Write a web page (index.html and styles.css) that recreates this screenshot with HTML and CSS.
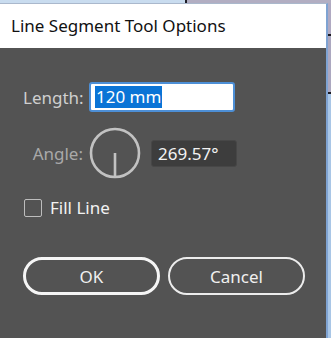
FILE: index.html
```html
<!DOCTYPE html>
<html>
<head>
<meta charset="utf-8">
<link rel="stylesheet" href="styles.css">
</head>
<body>
<div class="topstrip"><div class="strip-left"></div><div class="strip-tick"></div><div class="strip-right"></div></div>
<div class="frame">
  <div class="dialog">
    <div class="titlebar">Line Segment Tool Options</div>
    <div class="panel">
      <div class="fields">
        <label class="lbl lbl-length">Length:</label>
        <div class="input"><span class="sel">120 mm</span></div>
        <label class="lbl lbl-angle">Angle:</label>
        <div class="angle-row">
          <svg class="dial" width="52" height="52" viewBox="0 0 52 52">
            <circle cx="26" cy="26" r="24" fill="none" stroke="#c2c2c2" stroke-width="2.6"/>
            <line x1="26" y1="26" x2="26" y2="50" stroke="#c2c2c2" stroke-width="2.6"/>
          </svg>
          <div class="angle-field">269.57°</div>
        </div>
      </div>
      <div class="check-row">
        <span class="checkbox"></span>
        <span class="check-label">Fill Line</span>
      </div>
      <div class="buttons">
        <div class="btn btn-ok">OK</div>
        <div class="btn btn-cancel">Cancel</div>
      </div>
    </div>
  </div>
  <div class="side">
    <div class="side-top"></div>
    <div class="side-tick"></div>
    <div class="side-mid"></div>
    <div class="side-tick"></div>
    <div class="side-bottom"></div>
  </div>
</div>
</body>
</html>
```
FILE: styles.css
```css
html, body {
  margin: 0;
  padding: 0;
  width: 331px;
  height: 338px;
  overflow: hidden;
  background: #a9c6e6;
  font-family: "Noto Sans", "Open Sans", sans-serif;
}
.topstrip {
  display: flex;
  height: 3px;
}
.strip-left { width: 185px; background: #c9dcef; }
.strip-tick { width: 2px; background: #1e1e28; }
.strip-right { flex: 1; background: #b2aec2; }
.frame {
  display: flex;
  height: 335px;
}
.dialog {
  width: 326px;
  display: flex;
  flex-direction: column;
  border-top: 1px solid #aab8cc;
  border-right: 2px solid #7fa3d2;
}
.titlebar {
  height: 44px;
  background: #ffffff;
  color: #111;
  font-size: 17px;
  line-height: 44px;
  padding-left: 11px;
  box-sizing: border-box;
}
.panel {
  flex: 1;
  background: #535353;
  padding: 34px 0 0 23px;
  box-sizing: border-box;
}
.fields {
  display: grid;
  grid-template-columns: 60px auto;
  column-gap: 6px;
  row-gap: 15px;
  align-items: center;
}
.lbl {
  text-align: right;
  font-size: 17px;
  white-space: nowrap;
}
.lbl-length { color: #cfcfcf; }
.lbl-angle { color: #a9a9a9; }
.input {
  width: 146px;
  height: 30px;
  box-sizing: border-box;
  background: #fff;
  border: 2px solid #4d8fd6;
  border-radius: 3px;
  padding: 2px 4px;
  display: flex;
  align-items: center;
}
.sel {
  background: #0a74d6;
  color: #fff;
  font-size: 17px;
  line-height: 22px;
  padding: 0 1px;
}
.angle-row {
  display: flex;
  align-items: center;
  gap: 10px;
}
.dial { display: block; }
.angle-field {
  width: 86px;
  height: 27px;
  box-sizing: border-box;
  background: #3d3d3d;
  border: 1px solid #474747;
  border-radius: 3px;
  color: #f2f2f2;
  font-size: 17px;
  line-height: 25px;
  padding-left: 6px;
}
.check-row {
  display: flex;
  align-items: center;
  gap: 8px;
  height: 23px;
  margin-top: 17px;
  margin-left: 1px;
}
.checkbox {
  width: 18px;
  height: 18px;
  box-sizing: border-box;
  border: 1.5px solid #bdbdbd;
  border-radius: 2px;
}
.check-label {
  color: #f2f2f2;
  font-size: 17px;
}
.buttons {
  display: flex;
  gap: 8px;
  margin-top: 38px;
}
.btn {
  width: 137px;
  height: 38px;
  box-sizing: border-box;
  border-radius: 19px;
  color: #f0f0f0;
  font-size: 17px;
  display: flex;
  align-items: center;
  justify-content: center;
}
.btn-ok { border: 3px solid #f5f5f5; }
.btn-cancel { border: 2px solid #ececec; }
.side {
  flex: 1;
  display: flex;
  flex-direction: column;
}
.side-top { height: 31px; background: #b0aac2; }
.side-tick { height: 2px; background: #1a1a22; }
.side-mid { height: 56px; background: #aca8c0; }
.side-bottom { flex: 1; background: #a9c6e6; }
```
